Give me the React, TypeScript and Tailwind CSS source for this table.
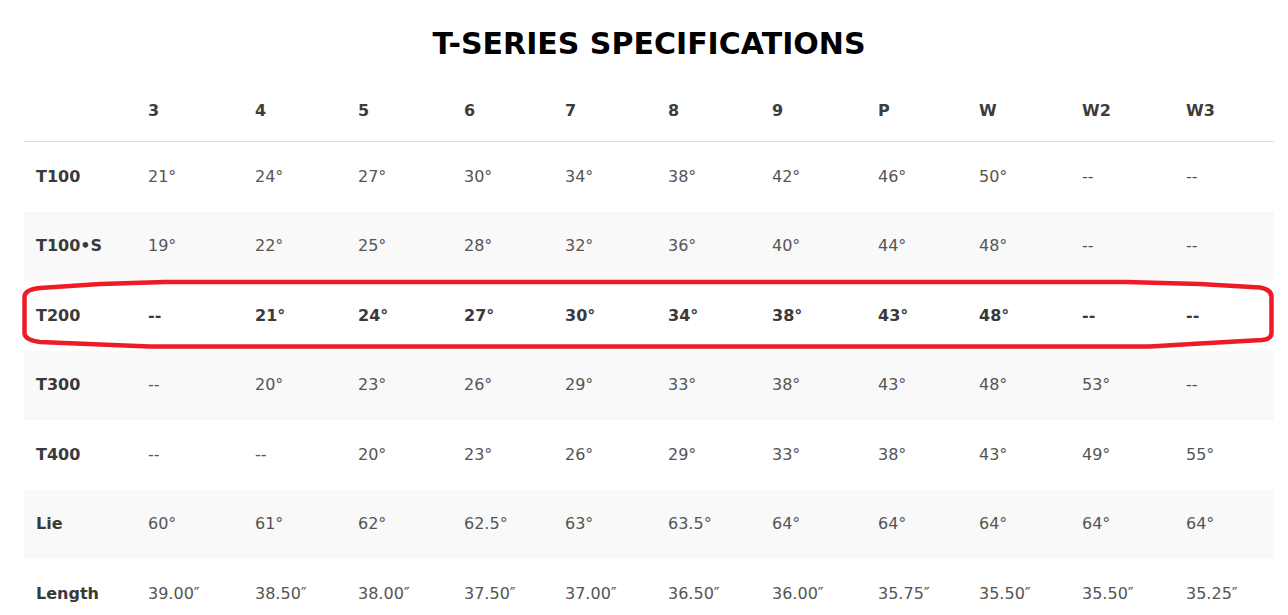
import React from "react";

const cols = ["3", "4", "5", "6", "7", "8", "9", "P", "W", "W2", "W3"];

type Row = { label: string; values: string[]; grey?: boolean; bold?: boolean };

const rows: Row[] = [
  { label: "T100", values: ["21°", "24°", "27°", "30°", "34°", "38°", "42°", "46°", "50°", "--", "--"] },
  { label: "T100•S", values: ["19°", "22°", "25°", "28°", "32°", "36°", "40°", "44°", "48°", "--", "--"], grey: true },
  { label: "T200", values: ["--", "21°", "24°", "27°", "30°", "34°", "38°", "43°", "48°", "--", "--"], bold: true },
  { label: "T300", values: ["--", "20°", "23°", "26°", "29°", "33°", "38°", "43°", "48°", "53°", "--"], grey: true },
  { label: "T400", values: ["--", "--", "20°", "23°", "26°", "29°", "33°", "38°", "43°", "49°", "55°"] },
  { label: "Lie", values: ["60°", "61°", "62°", "62.5°", "63°", "63.5°", "64°", "64°", "64°", "64°", "64°"], grey: true },
  { label: "Length", values: ["39.00″", "38.50″", "38.00″", "37.50″", "37.00″", "36.50″", "36.00″", "35.75″", "35.50″", "35.50″", "35.25″"] },
];

const gridCols =
  "grid grid-cols-[112px_107px_103px_106px_101px_103px_104px_106px_101px_103px_104px_100px]";

export default function App() {
  return (
    <div className="relative w-[1288px] h-[615px] overflow-hidden bg-white font-['DejaVu_Sans',sans-serif]">
      <div className="ml-[24px] w-[1250px]">
        <div className="pt-[29px] text-center text-[30px] leading-[30px] font-bold text-black">
          T-SERIES SPECIFICATIONS
        </div>
        <div className={`${gridCols} h-[83px] pt-[22px] items-center border-b border-[#dddddd] text-[16px] font-bold text-[#3d3d3d]`}>
          <div className="px-[12px]"></div>
          {cols.map((c) => (
            <div key={c} className="px-[12px]">{c}</div>
          ))}
        </div>
        {rows.map((r) => (
          <div
            key={r.label}
            className={`${gridCols} h-[69.5px] items-center text-[16px] ${r.grey ? "bg-[#f9f9f9]" : "bg-white"}`}
          >
            <div className="px-[12px] font-bold text-[#3a3a3a]">{r.label}</div>
            {r.values.map((v, i) => (
              <div
                key={i}
                className={`px-[12px] ${r.bold ? "font-bold text-[#3a3a3a]" : "text-[#555555]"}`}
              >
                {v}
              </div>
            ))}
          </div>
        ))}
      </div>
      <svg
        className="absolute left-0 top-0 pointer-events-none"
        width="1288"
        height="615"
        viewBox="0 0 1288 615"
      >
        <path
          d="M 24.5 297 Q 24.5 289.5 40 288 L 100 284 L 165 282 L 1125 282 L 1200 284 L 1260 287.5 Q 1271.5 289.5 1271.5 297 L 1271.5 333 Q 1271.5 339 1262 340 L 1200 343.5 L 1150 346.5 L 150 346.5 L 100 344.5 L 40 342 Q 24.5 340 24.5 333 Z"
          fill="none"
          stroke="#ed1c24"
          strokeWidth="4.5"
          strokeLinejoin="round"
        />
      </svg>
    </div>
  );
}
